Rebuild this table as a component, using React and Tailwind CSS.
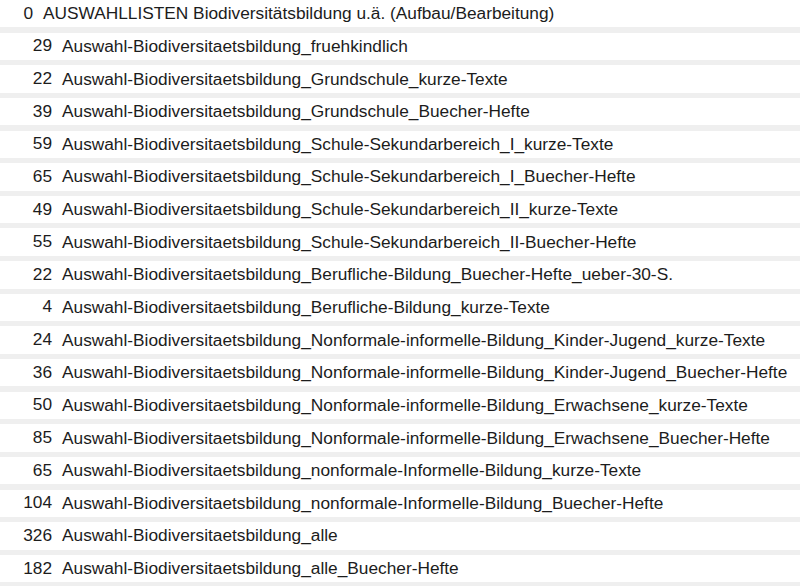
const items = [
  [29, 'Auswahl-Biodiversitaetsbildung_fruehkindlich'],
  [22, 'Auswahl-Biodiversitaetsbildung_Grundschule_kurze-Texte'],
  [39, 'Auswahl-Biodiversitaetsbildung_Grundschule_Buecher-Hefte'],
  [59, 'Auswahl-Biodiversitaetsbildung_Schule-Sekundarbereich_I_kurze-Texte'],
  [65, 'Auswahl-Biodiversitaetsbildung_Schule-Sekundarbereich_I_Buecher-Hefte'],
  [49, 'Auswahl-Biodiversitaetsbildung_Schule-Sekundarbereich_II_kurze-Texte'],
  [55, 'Auswahl-Biodiversitaetsbildung_Schule-Sekundarbereich_II-Buecher-Hefte'],
  [22, 'Auswahl-Biodiversitaetsbildung_Berufliche-Bildung_Buecher-Hefte_ueber-30-S.'],
  [4, 'Auswahl-Biodiversitaetsbildung_Berufliche-Bildung_kurze-Texte'],
  [24, 'Auswahl-Biodiversitaetsbildung_Nonformale-informelle-Bildung_Kinder-Jugend_kurze-Texte'],
  [36, 'Auswahl-Biodiversitaetsbildung_Nonformale-informelle-Bildung_Kinder-Jugend_Buecher-Hefte'],
  [50, 'Auswahl-Biodiversitaetsbildung_Nonformale-informelle-Bildung_Erwachsene_kurze-Texte'],
  [85, 'Auswahl-Biodiversitaetsbildung_Nonformale-informelle-Bildung_Erwachsene_Buecher-Hefte'],
  [65, 'Auswahl-Biodiversitaetsbildung_nonformale-Informelle-Bildung_kurze-Texte'],
  [104, 'Auswahl-Biodiversitaetsbildung_nonformale-Informelle-Bildung_Buecher-Hefte'],
  [326, 'Auswahl-Biodiversitaetsbildung_alle'],
  [182, 'Auswahl-Biodiversitaetsbildung_alle_Buecher-Hefte'],
];

function Row({ count, label, indent }) {
  return (
    <div className="flex items-center h-[27.4px] mb-[5.25px] bg-white whitespace-nowrap">
      <span className={`w-[30px] text-right shrink-0 ${indent ? 'ml-[22px]' : 'ml-[3px]'}`}>{count}</span>
      <span className="ml-[10px] pt-px">{label}</span>
    </div>
  );
}

export default function App() {
  return (
    <div
      className="w-[800px] h-[586px] overflow-hidden bg-[#efefef] text-[17.3px] text-[#1c1c1c]"
      style={{ fontFamily: '"Liberation Sans", Arial, sans-serif' }}
    >
      <Row count={0} label="AUSWAHLLISTEN Biodiversitätsbildung u.ä. (Aufbau/Bearbeitung)" />
      {items.map(([c, l], i) => (
        <Row key={i} count={c} label={l} indent />
      ))}
    </div>
  );
}
